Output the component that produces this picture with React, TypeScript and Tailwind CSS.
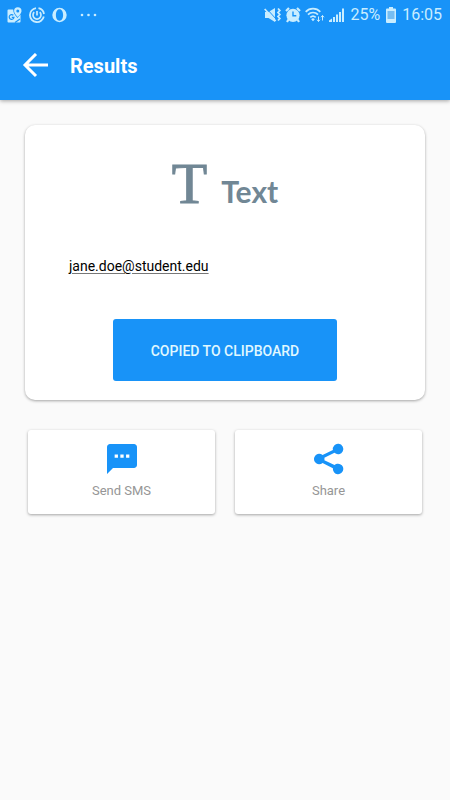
import React from 'react';

function Notifications() {
  return (
    <div className="flex items-center gap-[7px]">
      <svg width="15" height="16" viewBox="0 0 15 16" aria-hidden="true">
        <path d="M1.500 2.500h4.700C6.200 6 8 8 10.500 11l3-3.500v7a1 1 0 0 1-1 1h-11a1 1 0 0 1-1-1v-11a1 1 0 0 1 1-1z" fill="currentColor" />
        <path d="M10.800.2A3.700 3.700 0 0 0 7.100 3.900c0 2.400 3.700 6 3.700 6s3.700-3.600 3.700-6A3.700 3.700 0 0 0 10.800.2zm0 2.200a1.500 1.500 0 1 1 0 3 1.500 1.500 0 0 1 0-3z" fill="currentColor" fillRule="evenodd" />
        <path d="M6.300 8.300A2.400 2.400 0 1 0 7 10.300H4.800M8 15.500l5-3.500" fill="none" stroke="#1893f8" strokeWidth="1.200" />
      </svg>
      <svg width="16" height="16" viewBox="0 0 16 16" fill="none" stroke="currentColor" aria-hidden="true">
        <path d="M9.500 1.200A7 7 0 0 1 15 7M14.800 9.500A7 7 0 1 1 7 1.100" strokeWidth="1.800" />
        <path d="M5.200 5.200a4 4 0 1 0 5.600 0M8 4V8.500" strokeWidth="1.700" />
      </svg>
      <svg width="15" height="16" viewBox="0 0 15 16" fill="currentColor" aria-hidden="true">
        <path d="M7.500.8a7.200 7.200 0 1 0 0 14.400 7.200 7.200 0 0 0 0-14.400zm0 1.500c2.300 0 3.600 2.500 3.600 5.700s-1.300 5.700-3.600 5.700S3.900 11.200 3.900 8s1.300-5.700 3.600-5.700z" fillRule="evenodd" />
      </svg>
      <svg className="ml-1.5" width="18" height="16" viewBox="0 0 18 16" fill="currentColor" aria-hidden="true">
        <circle cx="2" cy="8" r="1.300" />
        <circle cx="8.500" cy="8" r="1.300" />
        <circle cx="15" cy="8" r="1.300" />
      </svg>
    </div>
  );
}

function SystemStatus() {
  return (
    <div className="flex items-center gap-1">
      <svg width="17" height="16" viewBox="0 0 17 16" aria-hidden="true">
        <path d="M1 5h3.500L11 1v14l-6.500-4H1z" fill="currentColor" />
        <path d="M2.500 1.500l10 11" stroke="#1893f8" strokeWidth="1" />
        <path d="M.7 2l11 12" stroke="currentColor" strokeWidth="1.700" />
        <path d="M14 1.500L15.800 3.500 14 5.500l1.800 2L14 9.500l1.800 2-1.800 2" stroke="currentColor" fill="none" strokeWidth="1.800" />
      </svg>
      <svg width="16" height="16" viewBox="0 0 16 16" aria-hidden="true">
        <circle cx="8" cy="8.300" r="6.600" fill="currentColor" />
        <path d="M1 4l3-3M15 4l-3-3M3.500 12.500L2 15M12.500 12.500L14 15" stroke="currentColor" strokeWidth="2.200" />
        <path d="M8 4.500v4.300h3.300" fill="none" stroke="#1893f8" strokeWidth="1.400" />
      </svg>
      <svg width="20" height="16" viewBox="0 0 20 16" fill="none" stroke="currentColor" aria-hidden="true">
        <path d="M.7 4.800a10 10 0 0 1 14.600 0M3 7.600a7 7 0 0 1 10 0M5.300 10.300a4 4 0 0 1 5.400 0" strokeWidth="1.700" />
        <path d="M6.200 12.200a2.500 2.500 0 0 1 3.600 0L8 14.300z" fill="currentColor" stroke="none" />
        <path d="M13.500 9.500v5M12 12.700l1.500 1.800 1.500-1.800M17.500 13.500V8.500M16 10.300l1.500-1.800 1.500 1.800" strokeWidth="1" />
      </svg>
      <svg width="15" height="16" viewBox="0 0 15 16" fill="currentColor" aria-hidden="true">
        <path d="M0 15v-1.500l3-2V15zM4 10h2v5H4zM7 7.500h2V15H7zM10 5h2v10h-2zM13 1.500h2V15h-2z" />
      </svg>
      <span className="ml-0.5 text-base">25%</span>
      <svg className="mx-0.5" width="10" height="16" viewBox="0 0 10 16" aria-hidden="true">
        <path d="M3 0h4v1.500h2a1 1 0 0 1 1 1V15a1 1 0 0 1-1 1H1a1 1 0 0 1-1-1V2.500a1 1 0 0 1 1-1h2z" fill="currentColor" />
        <path d="M1.500 4h7v8h-7z" fill="#75bdf2" />
      </svg>
      <span className="text-base">16:05</span>
    </div>
  );
}

function Action({ label, path }: { label: string; path: string }) {
  return (
    <button
      type="button"
      className="flex h-[84px] flex-1 flex-col items-center rounded-[3px] bg-white pt-[11px] text-[13px] leading-5 text-[#969696] shadow-[0_1px_3px_rgba(0,0,0,0.35)]"
    >
      <svg width="36" height="36" viewBox="0 0 24 24" fill="#1893f8" aria-hidden="true">
        <path d={path} />
      </svg>
      <span className="mt-1">{label}</span>
    </button>
  );
}

const SMS_PATH =
  'M20 2H4c-1.100 0-1.990.9-1.990 2L2 22l4-4h14c1.100 0 2-.9 2-2V4c0-1.100-.9-2-2-2zM9.300 11.200H7.100V9h2.200v2.200zm3.800 0h-2.200V9h2.200v2.200zm3.800 0h-2.200V9h2.200v2.200z';
const SHARE_PATH =
  'M18 15.100c-.9 0-1.700.35-2.350.9L8.900 12.900a3.400 3.400 0 0 0 0-1.800l6.750-3.200A3.500 3.500 0 1 0 14.600 6L7.700 9.300A3.500 3.500 0 1 0 7.700 14.700l6.900 3.400a3.500 3.500 0 1 0 3.400-3z';

export default function App() {
  return (
    <div className="min-h-screen bg-[#fafafa] font-['Roboto',sans-serif]">
      <header className="bg-[#1893f8] shadow-[0_1px_4px_rgba(0,0,0,0.35)]">
        <div className="flex h-[30px] items-center justify-between pl-[7px] pr-2 text-[#c9edff]">
          <Notifications />
          <SystemStatus />
        </div>
        <div className="flex h-[70px] items-center gap-[22px] pl-[22px] pt-0.5 text-white">
          <button type="button" aria-label="Back">
            <svg width="26" height="26" viewBox="0 0 26 26" fill="none" stroke="currentColor" strokeWidth="3" aria-hidden="true">
              <path d="M26 12H3M14 1L3 12l11 11" />
            </svg>
          </button>
          <h1 className="text-xl font-bold">Results</h1>
        </div>
      </header>

      <main className="px-[25px] pt-[25px]">
        <section className="flex flex-col items-center rounded-[10px] bg-white pb-[19px] pt-[27px] shadow-[0_1px_3px_rgba(0,0,0,0.35)]">
          <h2 className="flex items-baseline gap-[14px] text-[#718795]">
            <span className="font-['Liberation_Serif',serif] text-[58px] leading-[64px] [-webkit-text-stroke:1px_#718795]" aria-hidden="true">T</span>
            <span className="font-['Lato',sans-serif] text-[30px] font-bold">Text</span>
          </h2>
          <p className="mt-10 w-full px-11 text-sm leading-5 text-black">
            <span className="underline decoration-[#777] decoration-1 underline-offset-2">jane.doe@student.edu</span>
          </p>
          <button type="button" className="mt-[43px] h-[62px] w-[56%] rounded-[3px] bg-[#1893f8] pt-0.5 text-sm font-medium text-[#e0f8ff]">
            COPIED TO CLIPBOARD
          </button>
        </section>

        <div className="mt-[30px] flex gap-5 px-[3px]">
          <Action label="Send SMS" path={SMS_PATH} />
          <Action label="Share" path={SHARE_PATH} />
        </div>
      </main>
    </div>
  );
}
